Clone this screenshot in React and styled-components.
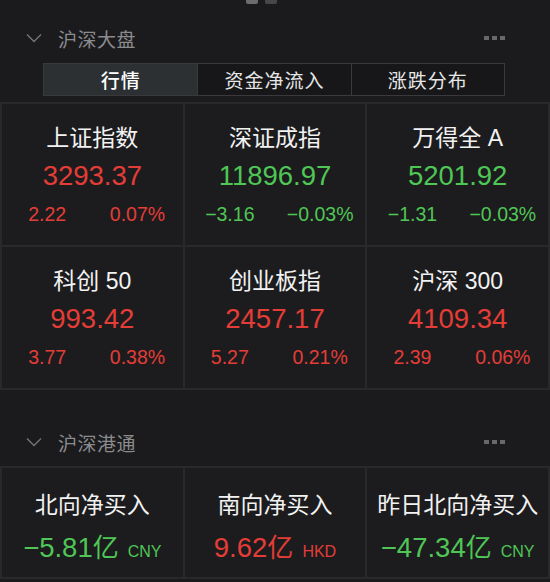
import React from "react";
import styled, { createGlobalStyle } from "styled-components";

const Global = createGlobalStyle`
  html, body { margin: 0; padding: 0; background: #1b1b1d; }
  body { font-family: "Liberation Sans", "Noto Sans CJK SC", sans-serif; -webkit-font-smoothing: antialiased; }
  * { box-sizing: border-box; }
`;

const RED = "#e43d37";
const GREEN = "#4fc655";
const toneColor = (t) => (t === "up" ? RED : GREEN);

const Page = styled.div`
  width: 550px;
  height: 582px;
  overflow: hidden;
  background: #1b1b1d;
`;

const Indicator = styled.div`
  display: flex;
  gap: 7px;
  padding-left: 246px;
  height: 4px;
`;

const Pill = styled.span`
  width: 12px;
  height: 4px;
  border-radius: 0 0 2px 2px;
  background: ${(p) => (p.$active ? "#6c6c6e" : "#47474a")};
`;

const Header = styled.div`
  display: flex;
  align-items: center;
  height: 40px;
  padding: 0 45px 0 26px;
  margin-top: ${(p) => p.$mt}px;
`;

const Chevron = styled.svg`
  width: 16px;
  height: 10px;
  flex: none;
`;

const HeaderTitle = styled.span`
  margin-left: 16px;
  font-family: "Noto Sans CJK SC", sans-serif;
  font-size: 19px;
  letter-spacing: 0.5px;
  color: #8b8b8e;
  flex: 1;
`;

const Dots = styled.div`
  display: flex;
  gap: 3px;
`;

const Dot = styled.span`
  width: 5px;
  height: 4px;
  background: #68686b;
`;

const Tabs = styled.div`
  display: grid;
  grid-template-columns: repeat(3, 1fr);
  margin: 5px 45px 0 43px;
  height: 33px;
  border: 1.5px solid #3a3a3d;
  background: #171719;
`;

const Tab = styled.div`
  display: flex;
  align-items: center;
  justify-content: center;
  font-family: "Noto Sans CJK SC", sans-serif;
  font-size: 19px;
  letter-spacing: 1px;
  color: ${(p) => (p.$active ? "#ffffff" : "#e6e6e6")};
  font-weight: ${(p) => (p.$active ? 500 : 400)};
  background: ${(p) => (p.$active ? "#2c3033" : "transparent")};
  & + & { border-left: 1.5px solid #3a3a3d; }
`;

const Grid = styled.div`
  display: grid;
  grid-template-columns: repeat(3, 1fr);
  gap: 2px;
  padding: 2px;
  background: #29292c;
  margin-top: ${(p) => p.$mt}px;
`;

const Cell = styled.div`
  background: #1c1c1e;
  height: ${(p) => p.$h}px;
  padding-top: ${(p) => p.$pt}px;
  display: flex;
  flex-direction: column;
  align-items: center;
`;

const Title = styled.div`
  font-family: "Liberation Sans", "Noto Sans CJK SC", sans-serif;
  font-size: 23px;
  line-height: 30px;
  color: #f2f2f2;
  white-space: nowrap;
`;

const CJK = styled.span`
  font-family: "Noto Sans CJK SC", sans-serif;
`;

const Value = styled.div`
  margin-top: 5px;
  font-size: 27.5px;
  line-height: 36px;
  color: ${(p) => toneColor(p.$tone)};
  white-space: nowrap;
`;

const Changes = styled.div`
  margin-top: 8px;
  align-self: stretch;
  display: grid;
  grid-template-columns: 1fr 1fr;
  font-size: 19.5px;
  line-height: 24px;
  color: ${(p) => toneColor(p.$tone)};
  text-align: center;
`;

const FlowValue = styled.div`
  margin-top: 8px;
  display: flex;
  align-items: baseline;
  line-height: 36px;
  color: ${(p) => toneColor(p.$tone)};
  white-space: nowrap;
`;

const Amount = styled.span`
  font-size: 27.5px;
`;

const Unit = styled.span`
  font-family: "Noto Sans CJK SC", sans-serif;
  font-size: 26px;
`;

const Currency = styled.span`
  font-size: 16px;
  margin-left: 9px;
`;

const indices = [
  { name: "上证指数", value: "3293.37", chg: "2.22", pct: "0.07%", tone: "up" },
  { name: "深证成指", value: "11896.97", chg: "−3.16", pct: "−0.03%", tone: "down" },
  { name: "万得全 A", value: "5201.92", chg: "−1.31", pct: "−0.03%", tone: "down" },
  { name: "科创 50", value: "993.42", chg: "3.77", pct: "0.38%", tone: "up" },
  { name: "创业板指", value: "2457.17", chg: "5.27", pct: "0.21%", tone: "up" },
  { name: "沪深 300", value: "4109.34", chg: "2.39", pct: "0.06%", tone: "up" },
];

const flows = [
  { name: "北向净买入", amount: "−5.81", cur: "CNY", tone: "down" },
  { name: "南向净买入", amount: "9.62", cur: "HKD", tone: "up" },
  { name: "昨日北向净买入", amount: "−47.34", cur: "CNY", tone: "down" },
];

const renderName = (name) =>
  name.split(/([\u4e00-\u9fff]+)/).filter(Boolean).map((part, i) =>
    /[\u4e00-\u9fff]/.test(part) ? <CJK key={i}>{part}</CJK> : <span key={i}>{part}</span>
  );

const SectionHeader = ({ title, mt }) => (
  <Header $mt={mt}>
    <Chevron viewBox="0 0 16 10">
      <polyline points="1,1.5 8,8.5 15,1.5" fill="none" stroke="#747477" strokeWidth="1.4" />
    </Chevron>
    <HeaderTitle>{title}</HeaderTitle>
    <Dots>
      <Dot />
      <Dot />
      <Dot />
    </Dots>
  </Header>
);

export default function App() {
  return (
    <Page>
      <Global />
      <Indicator>
        <Pill $active />
        <Pill />
      </Indicator>
      <SectionHeader title="沪深大盘" mt={14} />
      <Tabs>
        <Tab $active>行情</Tab>
        <Tab>资金净流入</Tab>
        <Tab>涨跌分布</Tab>
      </Tabs>
      <Grid $mt={6}>
        {indices.map((it) => (
          <Cell key={it.name} $h={141} $pt={17}>
            <Title>{renderName(it.name)}</Title>
            <Value $tone={it.tone}>{it.value}</Value>
            <Changes $tone={it.tone}>
              <span>{it.chg}</span>
              <span>{it.pct}</span>
            </Changes>
          </Cell>
        ))}
      </Grid>
      <SectionHeader title="沪深港通" mt={32} />
      <Grid $mt={4}>
        {flows.map((f) => (
          <Cell key={f.name} $h={109} $pt={20}>
            <Title>{renderName(f.name)}</Title>
            <FlowValue $tone={f.tone}>
              <Amount>{f.amount}</Amount>
              <Unit>亿</Unit>
              <Currency>{f.cur}</Currency>
            </FlowValue>
          </Cell>
        ))}
      </Grid>
    </Page>
  );
}
